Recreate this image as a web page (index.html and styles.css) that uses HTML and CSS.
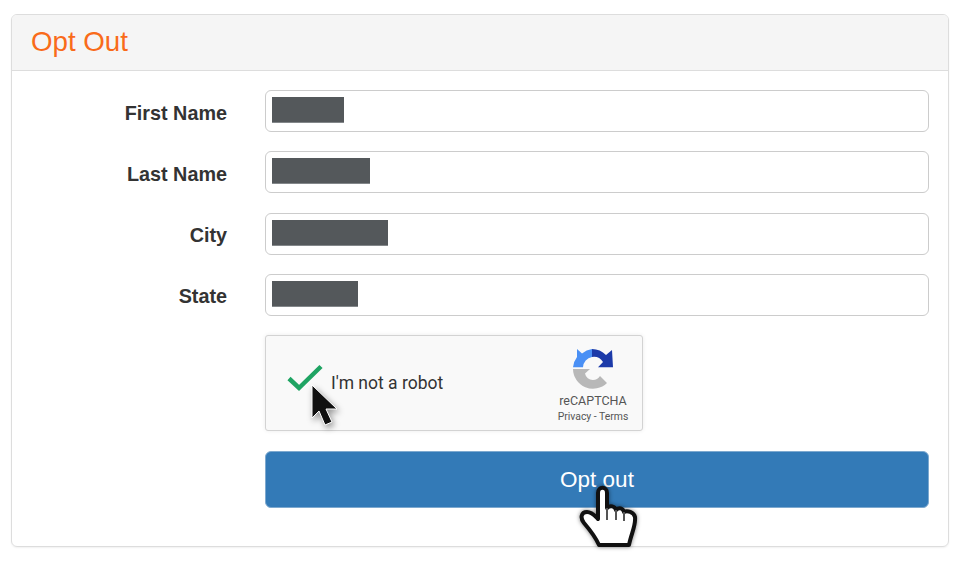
FILE: index.html
```html
<!DOCTYPE html>
<html lang="en">
<head>
<meta charset="utf-8">
<title>Opt Out</title>
<link rel="stylesheet" href="styles.css">
</head>
<body>
<section class="panel">
  <header class="panel-head"><h1>Opt Out</h1></header>
  <form class="panel-body">
    <div class="row"><label>First Name</label><div class="field"><span class="redact w72"></span></div></div>
    <div class="row"><label>Last Name</label><div class="field"><span class="redact w98"></span></div></div>
    <div class="row"><label>City</label><div class="field"><span class="redact w115"></span></div></div>
    <div class="row"><label>State</label><div class="field"><span class="redact w85"></span></div></div>
    <div class="captcha-row">
      <div class="captcha">
        <svg class="check" viewBox="0 0 36 28" width="36" height="28"><path d="M2 14.500 L12 24 L34 2.500" fill="none" stroke="#1fa463" stroke-width="4.500"/></svg>
        <span class="robot">I'm not a robot</span>
        <div class="brand">
          <svg class="logo" viewBox="0 0 40 42" width="40" height="42">
            <path d="M4 0 L9 4.500 A20 20 0 0 1 19 0 V8 A11 11 0 0 0 10 18.300 H0 A20 20 0 0 1 4 8 Z" fill="#4a90f5"/>
            <path d="M19 0 A20 20 0 0 1 33 6 L39 1 L40 18.300 H25 L30 13 A11 11 0 0 0 19 8 Z" fill="#1c3aa9"/>
            <path d="M0 20 H17 L12 24.500 A8 8 0 0 0 20 31 A9 9 0 0 0 27 27 L34 34 A20 20 0 0 1 0 20 Z" fill="#b8b8b8"/>
          </svg>
          <div class="brand-name">reCAPTCHA</div>
          <div class="brand-links">Privacy - Terms</div>
        </div>
        <svg class="arrow" viewBox="0 0 34 48" width="34" height="48"><path d="M3 2 L3 35 L10 28 L16 42 L23 39 L17 26 L28 26 Z" fill="#111" stroke="#fff" stroke-width="1"/></svg>
      </div>
    </div>
    <div class="button-row">
      <button type="button" class="submit">Opt out</button>
      <svg class="hand" viewBox="0 0 70 70" width="70" height="70">
        <path d="M23 9 C23 2 32 2 32 9 L32 24 C35 21 40 22 41 26 C44 23 48 24 49 28 C52 26 59 28 60 33 C61 42 56 50 54 61 L24 61 C20 52 15 46 9 39 C5 34 6 28 12 28 C17 28 20 32 23 35 Z" fill="#fff" stroke="#111" stroke-width="4" stroke-linejoin="round"/>
        <path d="M32 24 V36 M41 26 V36 M49 28 V37" fill="none" stroke="#555" stroke-width="2"/>
      </svg>
    </div>
  </form>
</section>
</body>
</html>
```
FILE: styles.css
```css
* { box-sizing: border-box; }
html, body { margin: 0; padding: 0; background: #fff; }
body {
  width: 962px;
  height: 562px;
  padding: 14px 13px 15px 11px;
  font-family: "Liberation Sans", Arial, sans-serif;
  overflow: hidden;
}
.panel {
  height: 533px;
  border: 1px solid #ddd;
  border-radius: 6px;
  box-shadow: 0 1px 2px rgba(0,0,0,.06);
  display: flex;
  flex-direction: column;
}
.panel-head {
  height: 56px;
  flex: none;
  background: #f5f5f5;
  border-bottom: 1px solid #ddd;
  border-radius: 5px 5px 0 0;
  padding: 0 0 2px 19px;
  display: flex;
  align-items: center;
}
.panel-head h1 {
  margin: 0;
  font-size: 27.700px;
  font-weight: 400;
  color: #f96b1a;
}
.panel-body {
  flex: 1;
  padding: 19px 19px 0 0;
  display: flex;
  flex-direction: column;
}
.row {
  display: grid;
  grid-template-columns: 215px 1fr;
  column-gap: 38px;
  align-items: center;
  margin-bottom: 19.300px;
}
.row label {
  text-align: right;
  font-size: 19.800px;
  font-weight: 700;
  color: #333;
  padding-top: 4px;
}
.field {
  height: 42px;
  border: 1px solid #ccc;
  border-radius: 6px;
  background: #fff;
  display: flex;
  align-items: center;
  padding: 0 0 2px 6px;
}
.redact { display: block; height: 26px; background: #54585b; border: 0 solid #83878a; border-bottom-width: 1px; }
.w72 { width: 72px; }
.w98 { width: 98px; }
.w115 { width: 115.500px; }
.w85 { width: 85.500px; }
.captcha-row { padding-left: 253px; }
.captcha {
  position: relative;
  width: 378px;
  height: 96px;
  background: #f9f9f9;
  border: 1px solid #d3d3d3;
  border-radius: 3px;
  box-shadow: 0 0 4px rgba(0,0,0,.08);
  display: flex;
  align-items: center;
  padding-left: 21px;
}
.check { flex: none; margin-top: -10px; }
.robot {
  margin-left: 8px;
  margin-top: -1px;
  font-family: Roboto, "Liberation Sans", sans-serif;
  font-size: 17.500px;
  color: #333;
}
.brand {
  margin-left: auto;
  width: 86px;
  margin-right: 6px;
  padding-top: 13px;
  display: flex;
  flex-direction: column;
  align-items: center;
  height: 100%;
}
.logo { flex: none; }
.brand-name { margin-top: 2px; font-family: Roboto, "Liberation Sans", sans-serif; font-size: 12.500px; color: #555; }
.brand-links { margin-top: 2px; font-family: Roboto, "Liberation Sans", sans-serif; font-size: 10.400px; color: #555; }
.arrow { position: absolute; left: 43px; top: 47px; filter: drop-shadow(2px 3px 3px rgba(0,0,0,.4)); }
.button-row { position: relative; padding-left: 253px; margin-top: 20px; }
.submit {
  display: block;
  width: 664px;
  height: 57px;
  background: #337ab7;
  border: 1px solid #7ea9cf;
  border-radius: 6px;
  color: #fff;
  font-family: "Liberation Sans", Arial, sans-serif;
  font-size: 22.500px;
  padding: 0;
}
.hand { position: absolute; left: 563px; top: 33px; filter: blur(.5px) drop-shadow(0 0 2px rgba(0,0,0,.5)); }
```
